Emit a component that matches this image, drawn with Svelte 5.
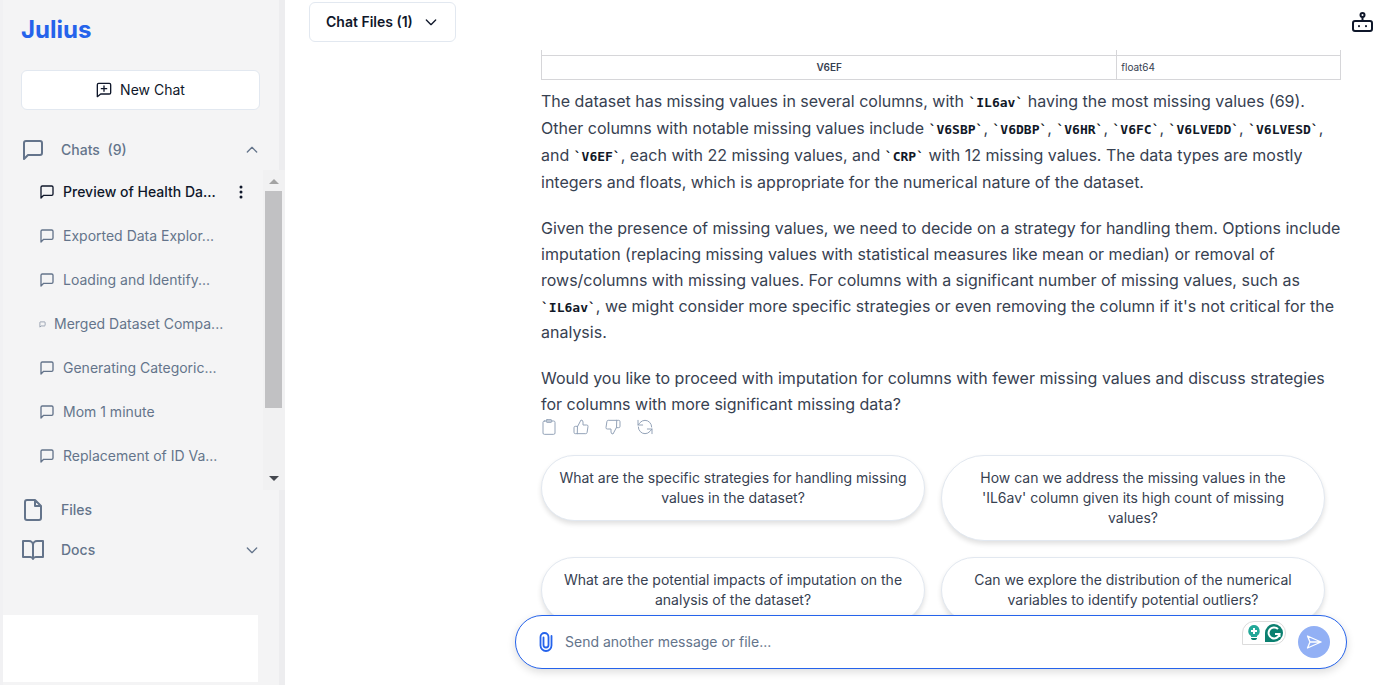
<script>
    const chats = [
        { title: 'Preview of Health Da...', active: true },
        { title: 'Exported Data Explor...' },
        { title: 'Loading and Identify...' },
        { title: 'Merged Dataset Compa...', small: true },
        { title: 'Generating Categoric...' },
        { title: 'Mom 1 minute' },
        { title: 'Replacement of ID Va...' }
    ];

    const suggestions = [
        'What are the specific strategies for handling missing values in the dataset?',
        "How can we address the missing values in the 'IL6av' column given its high count of missing values?",
        'What are the potential impacts of imputation on the analysis of the dataset?',
        'Can we explore the distribution of the numerical variables to identify potential outliers?'
    ];

    let message = $state('');
    let chatsOpen = $state(true);
</script>

{#snippet bubble(size)}
    <svg class="icon" width={size} height={size} viewBox="0 0 24 24">
        <path d="M21 15a2 2 0 0 1-2 2H7l-4 4V5a2 2 0 0 1 2-2h14a2 2 0 0 1 2 2z" />
    </svg>
{/snippet}

{#snippet chevron(up)}
    <svg class="icon" width="16" height="16" viewBox="0 0 24 24">
        <path d={up ? 'm5 15 7-7 7 7' : 'm5 9 7 7 7-7'} />
    </svg>
{/snippet}

<div class="app">
    <aside class="sidebar">
        <a class="brand" href="/">Julius</a>

        <button class="new-chat">
            <svg class="icon" width="16" height="16" viewBox="0 0 24 24">
                <path d="M22 16a2 2 0 0 1-2 2H7l-5 4V4a2 2 0 0 1 2-2h16a2 2 0 0 1 2 2zM12 6v8M8 10h8" />
            </svg>
            New Chat
        </button>

        <nav>
            <button class="section" aria-expanded={chatsOpen} onclick={() => (chatsOpen = !chatsOpen)}>
                <span class="section-icon">{@render bubble(24)}</span>
                <span class="section-name">Chats <span class="count">(9)</span></span>
                {@render chevron(chatsOpen)}
            </button>

            {#if chatsOpen}
                <div class="chat-list">
                    <ul>
                        {#each chats as chat}
                            <li class:active={chat.active}>
                                <a href="/chat">
                                    {@render bubble(chat.small ? 7 : 16)}
                                    {chat.title}
                                </a>
                                {#if chat.active}
                                    <button class="more" aria-label="Chat options">
                                        <svg width="16" height="16" viewBox="0 0 16 16" fill="currentColor">
                                            <circle cx="8" cy="3" r="1.5" />
                                            <circle cx="8" cy="8" r="1.5" />
                                            <circle cx="8" cy="13" r="1.5" />
                                        </svg>
                                    </button>
                                {/if}
                            </li>
                        {/each}
                    </ul>
                    <div class="scrollbar">
                        <svg width="10" height="5" viewBox="0 0 10 5" fill="#a3a3a3"><path d="M0 5 5 0l5 5z" /></svg>
                        <div class="track"><div class="thumb"></div></div>
                        <svg width="10" height="5" viewBox="0 0 10 5" fill="#45484f"><path d="M0 0l5 5 5-5z" /></svg>
                    </div>
                </div>
            {/if}

            <a class="section" href="/files">
                <span class="section-icon">
                    <svg class="icon" width="24" height="24" viewBox="0 0 24 24">
                        <path d="M14 2H6a2 2 0 0 0-2 2v16a2 2 0 0 0 2 2h12a2 2 0 0 0 2-2V8zM14 2v6h6" />
                    </svg>
                </span>
                <span class="section-name">Files</span>
            </a>
            <button class="section">
                <span class="section-icon">
                    <svg class="icon" width="24" height="24" viewBox="0 0 24 24">
                        <path d="M2 3h6a4 4 0 0 1 4 4v14a3 3 0 0 0-3-2H2zM22 3h-6a4 4 0 0 0-4 4v14a3 3 0 0 1 3-2h7z" />
                    </svg>
                </span>
                <span class="section-name">Docs</span>
                {@render chevron(false)}
            </button>
        </nav>

        <div class="account"></div>
    </aside>

    <main>
        <header>
            <button class="files-button">
                Chat Files (1)
                {@render chevron(false)}
            </button>
            <button class="robot" aria-label="Assistant settings">
                <svg class="icon" width="22" height="22" viewBox="0 0 22 22">
                    <rect x="1" y="10" width="19" height="10" rx="2" />
                    <circle cx="10.500" cy="4" r="2" />
                    <path d="M10.500 6v4M7 15v.2M14 15v.2" />
                </svg>
            </button>
        </header>

        <div class="messages">
            <div class="message">
                <table>
                    <tbody>
                        <tr class="cut"><th></th><td></td></tr>
                        <tr><th scope="row">V6EF</th><td>float64</td></tr>
                    </tbody>
                </table>

                <p class="with-code">
                    The dataset has missing values in several columns, with <code>`IL6av`</code> having the most
                    missing values (69). Other columns with notable missing values include <code>`V6SBP`</code>,
                    <code>`V6DBP`</code>, <code>`V6HR`</code>, <code>`V6FC`</code>, <code>`V6LVEDD`</code>,
                    <code>`V6LVESD`</code>, and <code>`V6EF`</code>, each with 22 missing values, and
                    <code>`CRP`</code> with 12 missing values. The data types are mostly integers and floats, which is
                    appropriate for the numerical nature of the dataset.
                </p>
                <p>
                    Given the presence of missing values, we need to decide on a strategy for handling them. Options
                    include imputation (replacing missing values with statistical measures like mean or median) or
                    removal of rows/columns with missing values. For columns with a significant number of missing
                    values, such as <code>`IL6av`</code>, we might consider more specific strategies or even removing
                    the column if it's not critical for the analysis.
                </p>
                <p>
                    Would you like to proceed with imputation for columns with fewer missing values and discuss
                    strategies for columns with more significant missing data?
                </p>

                <div class="actions">
                    <button aria-label="Copy">
                        <svg class="icon" width="16" height="16" viewBox="0 0 24 24">
                            <rect x="3" y="3" width="18" height="20" rx="2" />
                            <rect x="8" y="1" width="8" height="4" rx="1" />
                        </svg>
                    </button>
                    <button aria-label="Good answer">
                        <svg class="icon" width="16" height="16" viewBox="0 0 24 24">
                            <path d="M7 11l5-9.500a3 3 0 0 1 3 3V9h5.500a2 2 0 0 1 2 2.300l-1.400 9a2 2 0 0 1-2 1.700H7zM7 22H3.500a2 2 0 0 1-2-2v-7a2 2 0 0 1 2-2H7" />
                        </svg>
                    </button>
                    <button aria-label="Bad answer">
                        <svg class="icon" width="16" height="16" viewBox="0 0 24 24">
                            <path d="M17 13l-5 9.500a3 3 0 0 1-3-3V15H3.500a2 2 0 0 1-2-2.300l1.400-9a2 2 0 0 1 2-1.700H17zM17 2h3.500a2 2 0 0 1 2 2v7a2 2 0 0 1-2 2H17" />
                        </svg>
                    </button>
                    <button aria-label="Regenerate">
                        <svg class="icon" width="16" height="16" viewBox="0 0 24 24">
                            <path d="M22 12a10 10 0 0 0-10-10 10 10 0 0 0-7.500 3.500L1.500 9M1.500 2v7h7M2 12a10 10 0 0 0 10 10 10 10 0 0 0 7.500-3.500l3-3.500M22.500 22v-7h-7" />
                        </svg>
                    </button>
                </div>

                <div class="suggestions">
                    {#each suggestions as text}
                        <button onclick={() => (message = text)}>{text}</button>
                    {/each}
                </div>
            </div>
        </div>

        <form class="composer" onsubmit={(e) => e.preventDefault()}>
            <button type="button" class="attach" aria-label="Attach a file">
                <svg class="icon" width="14" height="20" viewBox="0 0 14 20">
                    <path d="M12.500 4v9.500a5.500 5.500 0 0 1-11 0V5a4 4 0 0 1 8 0v8a2.500 2.500 0 0 1-5 0V5.500" />
                </svg>
            </button>
            <input type="text" aria-label="Message" placeholder="Send another message or file..." bind:value={message} />
            <div class="grammar">
                <svg width="14" height="16" viewBox="0 0 14 16">
                    <path fill="#22a898" d="M7 0a6 6 0 0 0-3 11v1h6v-1A6 6 0 0 0 7 0z" />
                    <path fill="#0b8070" d="M4 13h6a3 2 0 0 1-6 0z" />
                    <path stroke="#fff" stroke-width="2" d="M7 3v6M4 6h6" />
                </svg>
                <svg width="18" height="18" viewBox="0 0 18 18">
                    <path fill="#0b8070" d="M9 0a9 9 0 1 1 0 18H0V9a9 9 0 0 1 9-9z" />
                    <path fill="none" stroke="#fff" stroke-width="2" d="M13 5a5.500 5.500 0 1 0 1.500 5H10M14.500 10v3" />
                </svg>
            </div>
            <button class="send" aria-label="Send">
                <svg class="icon" width="16" height="16" viewBox="0 0 16 16">
                    <path d="M1.500 2 15 8 1.500 14 4 8zM4 8H15" />
                </svg>
            </button>
        </form>
    </main>
</div>

<style>
    :global(body) {
        margin: 0;
        background: #fff;
    }

    .app {
        display: flex;
        height: 100vh;
        overflow: hidden;
        font-family: Inter, 'Liberation Sans', sans-serif;
        font-size: 14px;
        line-height: 20px;
        color: #0f172a;
    }

    .app * {
        box-sizing: border-box;
    }

    button,
    input {
        font: inherit;
        color: inherit;
        background: none;
        border: none;
        padding: 0;
    }

    button {
        cursor: pointer;
    }

    a {
        color: inherit;
        text-decoration: none;
    }

    svg {
        display: block;
        flex-shrink: 0;
    }

    .icon {
        fill: none;
        stroke: currentColor;
        stroke-width: 2;
        stroke-linecap: round;
        stroke-linejoin: round;
    }

    /* sidebar */
    .sidebar {
        display: flex;
        flex-direction: column;
        flex: 0 0 285px;
        background: #f4f4f5;
        border-left: 3px solid #f1f1f3;
        border-right: 6px solid #ededef;
    }

    .brand {
        margin: 14px 18px 24px;
        font-size: 24px;
        line-height: 32px;
        font-weight: 700;
        color: #2563eb;
    }

    .new-chat {
        display: flex;
        align-items: center;
        justify-content: center;
        gap: 8px;
        height: 40px;
        margin: 0 19px 20px 18px;
        background: #fff;
        border: 1px solid #e2e8f0;
        border-radius: 6px;
    }

    .section {
        display: flex;
        align-items: center;
        width: 100%;
        height: 40px;
        padding: 0 19px 0 18px;
        color: #64748b;
        font-weight: 500;
        text-align: left;
    }

    .section-icon {
        width: 40px;
    }

    .section-name {
        flex: 1;
    }

    .count {
        margin-left: 4px;
    }

    .chat-list {
        display: flex;
        height: 320px;
        margin-right: -6px;
    }

    ul {
        flex: 1;
        margin: 0;
        padding: 0 0 0 36px;
        list-style: none;
        overflow: hidden;
    }

    li {
        display: flex;
        align-items: center;
        justify-content: space-between;
        height: 44px;
        padding-right: 14px;
        color: #64748b;
    }

    li a {
        display: flex;
        align-items: center;
        gap: 8px;
        white-space: nowrap;
    }

    li.active {
        color: #0f172a;
        font-weight: 500;
    }

    .scrollbar {
        display: flex;
        flex-direction: column;
        align-items: center;
        width: 22px;
        padding: 9px 3px 9px 2px;
        background: #f1f1f2;
    }

    .track {
        flex: 1;
        width: 100%;
        padding: 7px 0;
    }

    .thumb {
        height: 78%;
        background: #c1c1c3;
    }

    .account {
        height: 67px;
        margin: auto 21px 3px 0;
        background: #fff;
    }

    /* conversation */
    main {
        display: flex;
        flex-direction: column;
        flex: 1;
        min-width: 0;
        padding-bottom: 16px;
    }

    header {
        display: flex;
        justify-content: space-between;
        height: 50px;
        padding: 2px 4px 0 24px;
        flex-shrink: 0;
    }

    .files-button {
        display: flex;
        align-items: center;
        gap: 10px;
        height: 40px;
        padding: 0 16px;
        font-weight: 600;
        border: 1px solid #e2e8f0;
        border-radius: 6px;
    }

    .robot {
        height: 40px;
    }

    .messages {
        flex: 1;
        min-height: 0;
        padding-right: 37px;
        overflow: hidden;
    }

    .message {
        max-width: 800px;
        margin-left: auto;
    }

    table {
        width: 100%;
        border-collapse: collapse;
        table-layout: fixed;
        font-size: 10px;
        line-height: 15px;
        color: #374151;
    }

    th,
    td {
        height: 24px;
        padding: 4px;
        border: 1px solid #d6d6d9;
        font-weight: 400;
        text-align: left;
    }

    th {
        width: 72%;
        font-weight: 600;
        text-align: center;
    }

    .cut th,
    .cut td {
        height: 5px;
        padding: 0;
        border-top: none;
    }

    p {
        margin: 0 0 20px;
        font-size: 16px;
        line-height: 26px;
        color: #374151;
    }

    .with-code {
        margin: 8px 0 19px;
        line-height: 27px;
    }

    code {
        font-family: 'DejaVu Sans Mono', monospace;
        font-size: 13px;
        line-height: 20px;
        font-weight: 600;
        color: #111827;
    }

    .actions {
        display: flex;
        gap: 16px;
        margin-top: -18px;
        color: #94a3b8;
    }

    .actions .icon {
        stroke-width: 1.5;
    }

    .suggestions {
        display: grid;
        grid-template-columns: 1fr 1fr;
        align-items: start;
        gap: 16px;
        margin: 20px 16px 0 0;
    }

    .suggestions button {
        padding: 12px 16px;
        color: #374151;
        background: #fff;
        border: 1px solid #e2e8f0;
        border-radius: 48px;
        box-shadow: 0 3px 5px rgba(0, 0, 0, 0.12);
    }

    .composer {
        display: flex;
        align-items: center;
        align-self: flex-end;
        width: calc(100% - 31px);
        max-width: 832px;
        height: 54px;
        margin-right: 31px;
        padding: 0 16px 0 23px;
        background: #fff;
        border: 1px solid #2563eb;
        border-radius: 27px;
        box-shadow: 0 3px 8px rgba(0, 0, 0, 0.14);
    }

    .attach {
        color: #2563eb;
    }

    .attach .icon {
        stroke-width: 1.8;
    }

    input {
        flex: 1;
        min-width: 0;
        padding: 0 12px;
        outline: none;
    }

    input::placeholder {
        color: #64748b;
        opacity: 1;
    }

    .grammar {
        display: flex;
        align-items: center;
        gap: 4px;
        height: 24px;
        margin: 0 12px 18px 0;
        padding: 0 2px 0 4px;
        border: 1px solid #dcdcdc;
        border-radius: 12px 12px 12px 0;
    }

    .send {
        display: grid;
        place-items: center;
        width: 32px;
        height: 32px;
        color: #fff;
        background: #92b0f5;
        border-radius: 50%;
    }

    .send .icon {
        stroke-width: 1.3;
    }
</style>
